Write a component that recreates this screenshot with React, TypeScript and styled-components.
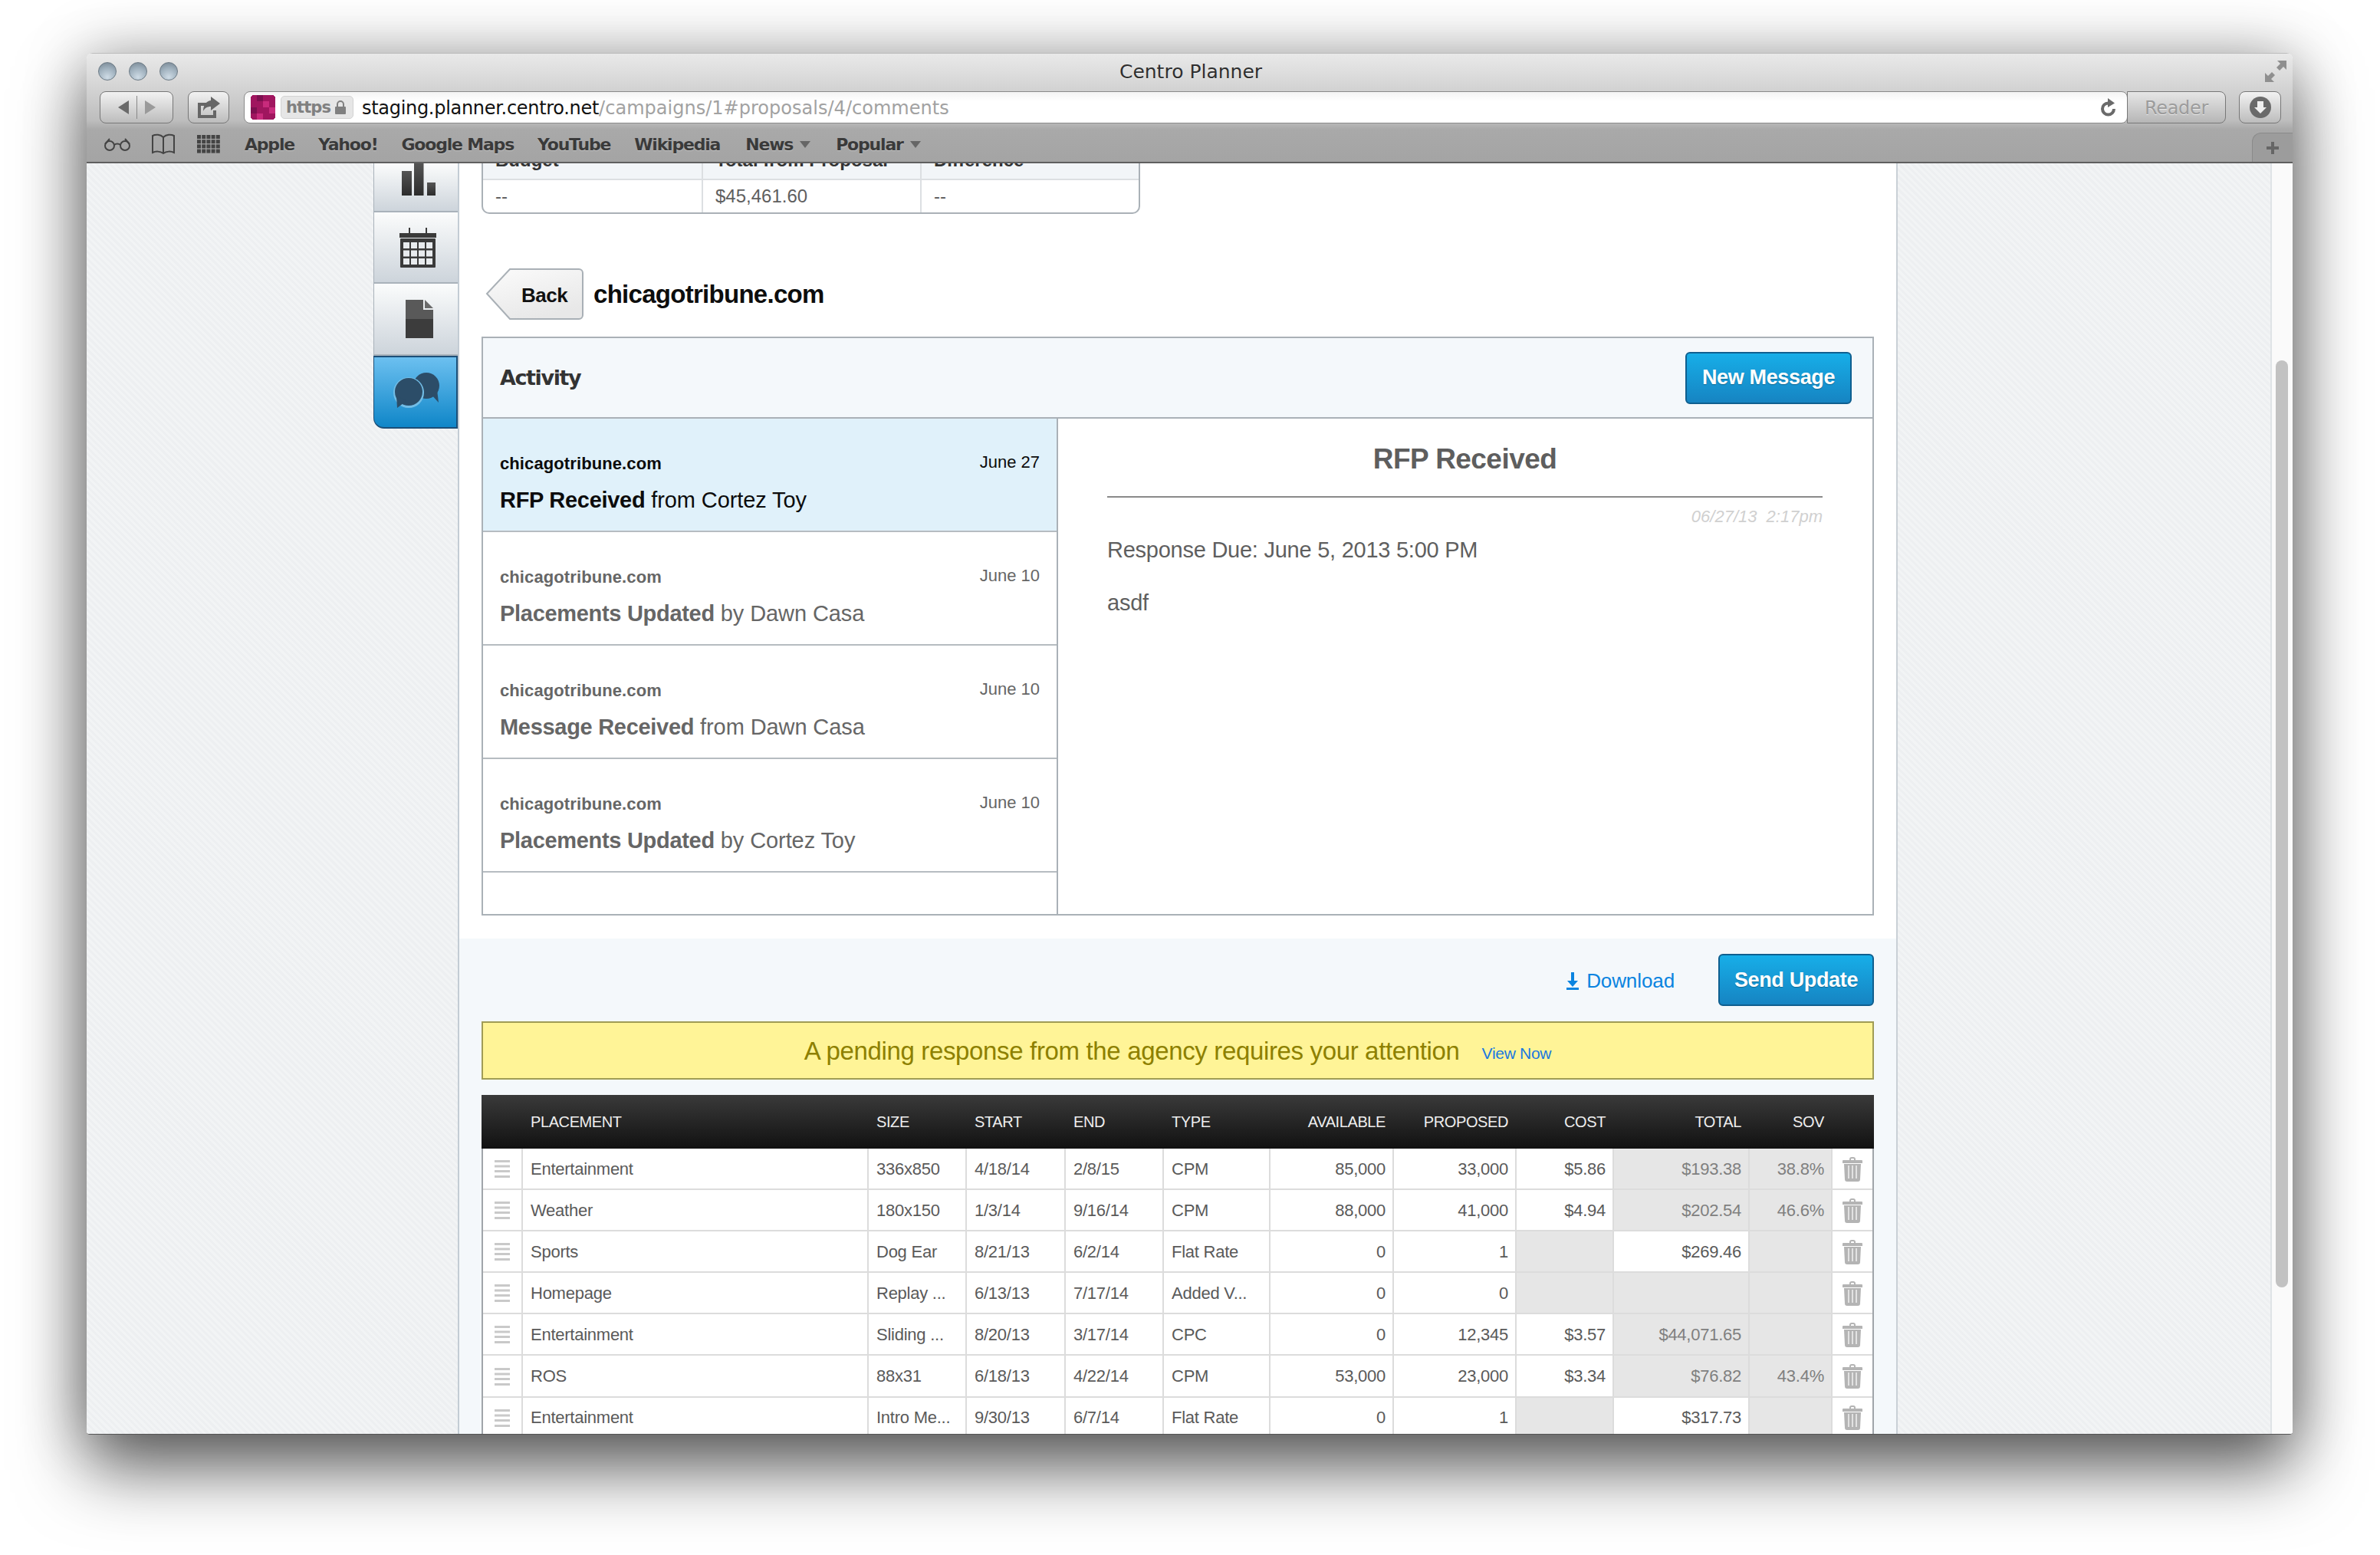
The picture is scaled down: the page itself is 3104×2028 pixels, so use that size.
import React from 'react'
import styled, { createGlobalStyle } from 'styled-components'

const GlobalStyle = createGlobalStyle`
  html, body {
    margin: 0;
    padding: 0;
    background: #fff;
  }
  * {
    box-sizing: border-box;
  }
`

const HELV = `"Liberation Sans", Arial, sans-serif`
const LUCIDA = `"DejaVu Sans", sans-serif`

const Desktop = styled.div`
  width: 3104px;
  height: 2028px;
  padding: 69px 114px 158px 113px;
  background: #fff;
  overflow: hidden;
`

const Win = styled.div`
  width: 2877px;
  height: 1802px;
  display: flex;
  flex-direction: column;
  border-radius: 8px 8px 4px 4px;
  overflow: hidden;
  box-shadow: 0 46px 90px rgba(0, 0, 0, 0.58), 0 0 80px rgba(0, 0, 0, 0.28);
  border-bottom: 1px solid #555;
`

const Chrome = styled.div`
  height: 144px;
  flex: none;
  background: linear-gradient(#e9e9e9 0, #d2d2d2 34%, #bdbdbd 62%, #a9a9a9 70%, #a4a4a4 100%);
  border-top: 1px solid #bcbcbc;
  border-bottom: 2px solid #5f5f5f;
  display: flex;
  flex-direction: column;
`

const TitleBar = styled.div`
  height: 46px;
  flex: none;
  padding: 0 8px 0 15px;
  display: grid;
  grid-template-columns: 1fr auto 1fr;
  align-items: center;
`

const Lights = styled.div`
  display: flex;
  gap: 16px;
`

const Light = styled.div`
  width: 24px;
  height: 24px;
  border-radius: 50%;
  border: 1px solid #6c7a85;
  background: radial-gradient(circle at 50% 85%, #cfdce6 0, #9fb0bd 55%, #74838f 100%);
`

const Title = styled.div`
  text-align: center;
  font: 25px ${LUCIDA};
  color: #2f2f2f;
  text-shadow: 0 1px 0 rgba(255, 255, 255, 0.6);
  margin-right: 4px;
`

const Expand = styled.svg`
  justify-self: end;
`

const ToolRow = styled.div`
  height: 42px;
  flex: none;
  margin-top: 3px;
  padding: 0 15px 0 17px;
  display: flex;
  align-items: center;
`

const ToolBtn = styled.div<{ $w: number; $ml?: number }>`
  width: ${p => p.$w}px;
  height: 42px;
  flex: none;
  margin-left: ${p => p.$ml ?? 0}px;
  border: 1px solid #777;
  border-radius: 8px;
  background: linear-gradient(#f2f2f2, #bcbcbc);
  display: flex;
  align-items: center;
  justify-content: center;
`

const BackForward = styled(ToolBtn)`
  margin-right: 19px;
  gap: 10px;
`

const Sep = styled.div`
  width: 1px;
  height: 30px;
  background: #888;
`

const UrlBar = styled.div`
  flex: 1;
  height: 42px;
  margin-left: 19px;
  display: flex;
  align-items: center;
  background: linear-gradient(#f4f4f4 0, #fff 30%);
  border: 1px solid #8a8a8a;
  border-radius: 8px;
  padding-left: 8px;
  overflow: hidden;
`

const Https = styled.div`
  width: 95px;
  height: 30px;
  margin: 0 11px 0 7px;
  display: flex;
  align-items: center;
  gap: 6px;
  padding-left: 6px;
  background: #e6e6e6;
  border-radius: 5px;
  border: 1px solid #d2d2d2;
  font: bold 21px ${LUCIDA};
  letter-spacing: -0.9px;
  color: #808080;
`

const Host = styled.span`
  font: 24px ${LUCIDA};
  letter-spacing: -0.3px;
  color: #111;
  white-space: nowrap;
  margin-top: 2px;
`

const UrlPath = styled.span`
  color: #a2a2a2;
  letter-spacing: 0.02px;
`

const UrlEnd = styled.div`
  flex: 1;
  display: flex;
  justify-content: flex-end;
  align-items: center;
  padding-right: 14px;
`

const Reader = styled.div`
  width: 129px;
  height: 42px;
  flex: none;
  margin-left: -1px;
  padding-top: 2px;
  border: 1px solid #777;
  border-radius: 0 8px 8px 0;
  background: linear-gradient(#e6e6e6, #b6b6b6);
  font: 24px ${LUCIDA};
  color: #9c9c9c;
  text-shadow: 0 1px 0 rgba(255, 255, 255, 0.6);
  display: flex;
  align-items: center;
  justify-content: center;
  letter-spacing: -0.3px;
`

const Bookmarks = styled.div`
  flex: 1;
  display: flex;
  align-items: center;
  padding: 4px 0 0 21px;
  position: relative;
`

const ShelfIcon = styled.svg<{ $ml: number }>`
  margin-left: ${p => p.$ml}px;
  flex: none;
`

const Mark = styled.div<{ $left?: number }>`
  font: bold 22px ${LUCIDA};
  letter-spacing: -1.2px;
  color: #3a3a3a;
  text-shadow: 0 1px 0 rgba(255, 255, 255, 0.35);
  margin-left: ${p => p.$left ?? 31}px;
  white-space: nowrap;
  display: flex;
  align-items: center;
  gap: 9px;
`

const Caret = styled.i`
  width: 0;
  height: 0;
  border-left: 7px solid transparent;
  border-right: 7px solid transparent;
  border-top: 9px solid #666;
`

const PlusTab = styled.div`
  position: absolute;
  right: 0;
  bottom: 0;
  width: 53px;
  height: 38px;
  background: #9c9c9c;
  border-radius: 12px 0 0 0;
  border-left: 1px solid #8a8a8a;
  border-top: 1px solid #8a8a8a;
  display: flex;
  align-items: center;
  justify-content: center;
`

const Viewport = styled.div`
  flex: 1;
  min-height: 0;
  display: flex;
  overflow: hidden;
  background-color: #edeff1;
  background-image: repeating-linear-gradient(
    45deg,
    rgba(255, 255, 255, 0.3) 0,
    rgba(255, 255, 255, 0.3) 3px,
    transparent 3px,
    transparent 6px
  );
`

const Page = styled.div`
  flex: none;
  display: flex;
`

const Gutter = styled.div`
  width: 29px;
  flex: none;
  margin-left: 486px;
  background: #fafafa;
  border-left: 2px solid #dfe3e6;
  padding: 257px 6px 0 5px;
`

const Thumb = styled.div`
  height: 1209px;
  background: #c2c2c2;
  border-radius: 8px;
`

const SideNav = styled.div`
  width: 110px;
  margin-left: 374px;
  flex: none;
  display: flex;
  flex-direction: column;
`

const NavTab = styled.div<{ $h: number; $active?: boolean; $pb?: number; $pl?: number }>`
  height: ${p => p.$h}px;
  display: flex;
  align-items: center;
  justify-content: center;
  padding: 0 0 ${p => p.$pb ?? 0}px ${p => p.$pl ?? 5}px;
  background: ${p =>
    p.$active ? 'linear-gradient(#6cc0f0, #0f86c8)' : 'linear-gradient(#fbfcfc, #cdd4db)'};
  border: 1px solid ${p => (p.$active ? '#1c4f78' : '#a9b2ba')};
  border-width: ${p => (p.$active ? '2px 2px 2px 1px' : '0 0 2px 1px')};
  border-radius: ${p => (p.$active ? '0 0 0 14px' : '0')};
`

const Column = styled.div`
  width: 1878px;
  flex: none;
  background: #fff;
  border-left: 2px solid #c3ccd4;
  border-right: 2px solid #c9d0d6;
  overflow: hidden;
  display: flex;
  flex-direction: column;
`

const Upper = styled.div`
  padding: 0 29px 30px 29px;
  background: #fff;
`

const SummaryTable = styled.div`
  width: 859px;
  height: 66px;
  display: grid;
  grid-template-columns: 287px 285px 1fr;
  grid-template-rows: 22px 1fr;
  border: 2px solid #aab1b7;
  border-top: 0;
  border-radius: 0 0 10px 10px;
  overflow: hidden;
  font: 24px ${HELV};
  color: #5f5f5f;
`

const SummaryHead = styled.div`
  background: #f2f5f8;
  border-bottom: 2px solid #dcdfe2;
  border-right: 2px solid #dcdfe2;
  padding-left: 16px;
  font-weight: bold;
  color: #333;
  line-height: 24px;
  height: 22px;
  overflow: hidden;
  & > span {
    display: block;
    margin-top: -16px;
  }
  &:nth-child(3) {
    border-right: 0;
  }
`

const SummaryCell = styled.div`
  border-right: 2px solid #dcdfe2;
  padding-left: 16px;
  display: flex;
  align-items: center;
  &:last-child {
    border-right: 0;
  }
`

const TitleRow = styled.div`
  display: flex;
  align-items: center;
  margin-top: 71px;
  height: 67px;
  padding-left: 5px;
`

const BackBtn = styled.div`
  width: 128px;
  height: 67px;
  flex: none;
  position: relative;
  font: bold 26px ${HELV};
  letter-spacing: -0.5px;
  color: #111;
  display: flex;
  align-items: center;
  padding: 4px 0 0 47px;
`

const BackShape = styled.svg`
  position: absolute;
  left: 0;
  top: 0;
`

const BackLabel = styled.span`
  position: relative;
`

const SiteTitle = styled.div`
  margin-left: 13px;
  font: bold 33px ${HELV};
  letter-spacing: -0.72px;
  color: #0d0d0d;
`

const Panel = styled.div`
  margin-top: 22px;
  height: 755px;
  border: 2px solid #aab1b7;
  display: flex;
  flex-direction: column;
`

const PanelHead = styled.div`
  height: 105px;
  flex: none;
  background: #f4f8fb;
  border-bottom: 2px solid #aab1b7;
  display: flex;
  align-items: center;
  justify-content: space-between;
  padding: 0 27px 0 22px;
`

const PanelTitle = styled.div`
  font: bold 27px ${LUCIDA};
  letter-spacing: -1.4px;
  color: #333;
`

const BlueBtn = styled.div<{ $w: number; $h: number }>`
  width: ${p => p.$w}px;
  height: ${p => p.$h}px;
  flex: none;
  background: linear-gradient(#17aee8, #1684c2);
  border: 2px solid #0f5f8f;
  border-radius: 6px;
  color: #fff;
  font: bold 27px ${HELV};
  letter-spacing: -0.35px;
  text-shadow: 0 1px 1px rgba(0, 0, 0, 0.3);
  display: flex;
  align-items: center;
  justify-content: center;
`

const PanelBody = styled.div`
  flex: 1;
  min-height: 0;
  display: flex;
`

const MsgList = styled.div`
  width: 750px;
  flex: none;
  border-right: 2px solid #aab1b7;
  display: flex;
  flex-direction: column;
`

const MsgRow = styled.div<{ $active?: boolean }>`
  height: 148px;
  flex: none;
  padding: 0 22px;
  background: ${p => (p.$active ? '#e0f1fa' : '#fff')};
  border-bottom: 2px solid #b6bcc1;
  display: flex;
  flex-direction: column;
  color: ${p => (p.$active ? '#0c0c0c' : '#666')};
`

const MsgTop = styled.div`
  display: flex;
  justify-content: space-between;
  margin-top: 45px;
  height: 28px;
  align-items: center;
`

const MsgSite = styled.div`
  font: bold 22px ${HELV};
  letter-spacing: 0.1px;
`

const MsgDate = styled.div`
  font: 22px ${HELV};
  margin-top: -4px;
`

const MsgLine = styled.div`
  margin-top: 17px;
  font: 29px ${HELV};
  letter-spacing: -0.1px;
  white-space: nowrap;
  & > b {
    letter-spacing: -0.3px;
  }
`

const Detail = styled.div`
  flex: 1;
  padding: 0 65px 0 64px;
  color: #5f5f5f;
`

const DetailTitle = styled.div`
  margin-top: 31px;
  text-align: center;
  font: bold 37px ${HELV};
  letter-spacing: -0.55px;
  color: #5e5e5e;
  line-height: 44px;
  padding-bottom: 26px;
  border-bottom: 2px solid #8a8a8a;
`

const DetailDate = styled.div`
  margin-top: 12px;
  text-align: right;
  font: italic 22px ${HELV};
  color: #d0d0d0;
  word-spacing: 6px;
`

const DetailText = styled.div<{ $top: number }>`
  margin-top: ${p => p.$top}px;
  font: 29px ${HELV};
  letter-spacing: -0.25px;
`

const Lower = styled.div`
  flex: 1;
  background: #f4f8fb;
  padding: 20px 29px 0 29px;
`

const ActionRow = styled.div`
  display: flex;
  justify-content: flex-end;
  align-items: center;
  height: 68px;
`

const DownloadLink = styled.div`
  display: flex;
  align-items: center;
  gap: 10px;
  margin: 2px 57px 0 0;
  font: 26px ${HELV};
  letter-spacing: -0.1px;
  color: #0a84e0;
`

const Banner = styled.div`
  margin-top: 20px;
  height: 76px;
  background: #fff497;
  border: 2px solid #a09c55;
  display: flex;
  align-items: center;
  justify-content: center;
  gap: 29px;
  padding-top: 2px;
  font: 33px ${HELV};
  letter-spacing: -0.35px;
  color: #8d8000;
`

const ViewNow = styled.a`
  font: 21px ${HELV};
  color: #1a78e0;
  letter-spacing: -0.3px;
  margin-top: 5px;
`

const COLS = '451px 128px 129px 128px 139px 161px 160px 127px 177px 108px 1fr'

const Grid = styled.div`
  margin-top: 20px;
  border-left: 2px solid #a0a5aa;
  border-right: 2px solid #a0a5aa;
  background: #fff;
`

const HeadRow = styled.div`
  margin: 0 -2px;
  height: 70px;
  display: grid;
  grid-template-columns: 54px ${COLS};
  align-items: center;
  background: linear-gradient(#3a3a3a, #111);
  font: 20px ${HELV};
  letter-spacing: -0.4px;
  color: #eee;
`

const HeadCell = styled.div<{ $right?: boolean }>`
  text-align: ${p => (p.$right ? 'right' : 'left')};
  padding: 0 ${p => (p.$right ? '11px' : '6px')} 0 10px;
  white-space: nowrap;
`

const BodyRow = styled.div`
  height: 54.1px;
  display: grid;
  grid-template-columns: 52px ${COLS};
  border-bottom: 2px solid #dcdcdc;
`

const Cell = styled.div<{ $right?: boolean; $shade?: boolean; $center?: boolean }>`
  border-right: 2px solid #dcdcdc;
  display: flex;
  align-items: center;
  justify-content: ${p => (p.$center ? 'center' : p.$right ? 'flex-end' : 'flex-start')};
  padding: 1px ${p => (p.$center ? '0' : p.$right ? '9px' : '4px')} 0 ${p => (p.$center ? '0' : '10px')};
  font: 22px ${HELV};
  letter-spacing: -0.25px;
  color: ${p => (p.$shade ? '#808080' : '#5a5a5a')};
  background: ${p => (p.$shade ? '#e6e6e6' : '#fff')};
  white-space: nowrap;
  overflow: hidden;
  &:last-child {
    border-right: 0;
  }
`

const Handle = () => (
  <svg width="20" height="23" viewBox="0 0 20 23">
    {[0, 6.5, 13, 20].map(y => (
      <rect key={y} x="0" y={y} width="20" height="3" fill="#c9c9c9" />
    ))}
  </svg>
)

const Trash = () => (
  <svg width="26" height="32" viewBox="0 0 26 32">
    <path d="M9 4V3a3 3 0 0 1 3-3h2a3 3 0 0 1 3 3v1h-2V3a1 1 0 0 0-1-1h-2a1 1 0 0 0-1 1v1z" fill="#b4b4b4" />
    <path d="M1 4h24a1 1 0 0 1 1 1v3H0V5a1 1 0 0 1 1-1z" fill="#b4b4b4" />
    <path d="M2 9h22l-1 20a3 3 0 0 1-3 3H6a3 3 0 0 1-3-3z" fill="#b4b4b4" />
    <path d="M8 11v17M13 11v17M18 11v17" stroke="#e2e2e2" strokeWidth="2" />
  </svg>
)

const BarsIcon = () => (
  <svg width="44" height="43" viewBox="0 0 44 43">
    <defs>
      <linearGradient id="dk" x1="0" y1="0" x2="0" y2="1">
        <stop offset="0" stopColor="#555" />
        <stop offset="1" stopColor="#2c2c2c" />
      </linearGradient>
    </defs>
    <rect x="0" y="11" width="13" height="32" fill="url(#dk)" />
    <rect x="16" y="0" width="12.5" height="43" fill="url(#dk)" />
    <rect x="33" y="26" width="11" height="17" fill="url(#dk)" />
  </svg>
)

const CalendarIcon = () => (
  <svg width="48" height="52" viewBox="0 0 48 52">
    <rect x="0" y="7" width="48" height="6" fill="#3a3a3a" />
    <rect x="1" y="14" width="46" height="38" rx="1" fill="#3a3a3a" />
    <rect x="12" y="0" width="2" height="9" fill="#3a3a3a" />
    <rect x="34" y="0" width="2" height="9" fill="#3a3a3a" />
    {[0, 1, 2].map(r =>
      [0, 1, 2, 3].map(c => (
        <rect key={`${r}${c}`} x={5 + c * 10} y={19 + r * 10.5} width="8" height="8" fill="#e8ebee" />
      ))
    )}
  </svg>
)

const DocIcon = () => (
  <svg width="36" height="50" viewBox="0 0 36 50">
    <path d="M0 0h23v13h13v37H0z" fill="#3c3c3c" />
    <path d="M0 0h23v13h13v12H0z" fill="#595959" />
    <path d="M25 0l11 11H25z" fill="#6a6a6a" />
  </svg>
)

const ChatIcon = () => (
  <svg width="64" height="47" viewBox="0 0 64 47">
    <circle cx="44" cy="17" r="17" fill="#2c4d68" />
    <path d="M50 28l10 11-2-17z" fill="#2c4d68" />
    <circle cx="21" cy="26" r="20" fill="#72bde6" />
    <circle cx="21" cy="25" r="18" fill="#2c4d68" />
    <path d="M5 30l1 16 12-9z" fill="#2c4d68" />
  </svg>
)

type RowData = {
  name: string
  size: string
  start: string
  end: string
  type: string
  avail: string
  proposed: string
  cost: string
  total: string
  sov: string
  totalOpen?: boolean
}

const rows: RowData[] = [
  { name: 'Entertainment', size: '336x850', start: '4/18/14', end: '2/8/15', type: 'CPM', avail: '85,000', proposed: '33,000', cost: '$5.86', total: '$193.38', sov: '38.8%' },
  { name: 'Weather', size: '180x150', start: '1/3/14', end: '9/16/14', type: 'CPM', avail: '88,000', proposed: '41,000', cost: '$4.94', total: '$202.54', sov: '46.6%' },
  { name: 'Sports', size: 'Dog Ear', start: '8/21/13', end: '6/2/14', type: 'Flat Rate', avail: '0', proposed: '1', cost: '', total: '$269.46', sov: '', totalOpen: true },
  { name: 'Homepage', size: 'Replay ...', start: '6/13/13', end: '7/17/14', type: 'Added V...', avail: '0', proposed: '0', cost: '', total: '', sov: '' },
  { name: 'Entertainment', size: 'Sliding ...', start: '8/20/13', end: '3/17/14', type: 'CPC', avail: '0', proposed: '12,345', cost: '$3.57', total: '$44,071.65', sov: '' },
  { name: 'ROS', size: '88x31', start: '6/18/13', end: '4/22/14', type: 'CPM', avail: '53,000', proposed: '23,000', cost: '$3.34', total: '$76.82', sov: '43.4%' },
  { name: 'Entertainment', size: 'Intro Me...', start: '9/30/13', end: '6/7/14', type: 'Flat Rate', avail: '0', proposed: '1', cost: '', total: '$317.73', sov: '', totalOpen: true },
]

const messages = [
  { action: 'RFP Received', rest: 'from Cortez Toy', date: 'June 27', active: true },
  { action: 'Placements Updated', rest: 'by Dawn Casa', date: 'June 10' },
  { action: 'Message Received', rest: 'from Dawn Casa', date: 'June 10' },
  { action: 'Placements Updated', rest: 'by Cortez Toy', date: 'June 10' },
]

const App = () => (
  <>
    <GlobalStyle />
    <Desktop>
      <Win>
        <Chrome>
          <TitleBar>
            <Lights>
              <Light />
              <Light />
              <Light />
            </Lights>
            <Title>Centro Planner</Title>
            <Expand width="28" height="28" viewBox="0 0 28 28">
              <path d="M16 0h12v12l-4-4-5 5-4-4 5-5zM0 28V16l4 4 5-5 4 4-5 5 4 4z" fill="#8f8f8f" />
            </Expand>
          </TitleBar>
          <ToolRow>
            <BackForward $w={96}>
              <svg width="14" height="18" viewBox="0 0 14 18"><path d="M14 0v18L0 9z" fill="#6a6a6a" /></svg>
              <Sep />
              <svg width="14" height="18" viewBox="0 0 14 18"><path d="M0 0v18l14-9z" fill="#9a9a9a" /></svg>
            </BackForward>
            <ToolBtn $w={54}>
              <svg width="34" height="28" viewBox="0 0 34 28">
                <path d="M3 8h12v4H7v12h16v-6h4v10H3z" fill="#666" />
                <path d="M20 0l12 9-12 9v-5c-5 0-8 2-10 6 0-8 4-13 10-14z" fill="#666" />
              </svg>
            </ToolBtn>
            <UrlBar>
              <svg width="32" height="32" viewBox="0 0 4 4" shapeRendering="crispEdges">
                <rect width="4" height="4" rx="0.5" fill="#a0165f" />
                <rect x="1" y="0" width="1" height="1" fill="#7d1050" />
                <rect x="2" y="1" width="1" height="1" fill="#c82b7c" />
                <rect x="0" y="2" width="1" height="1" fill="#7d1050" />
                <rect x="3" y="2" width="1" height="1" fill="#c82b7c" />
                <rect x="1" y="3" width="1" height="1" fill="#c82b7c" />
              </svg>
              <Https>
                https
                <svg width="14" height="18" viewBox="0 0 14 18">
                  <path d="M3 8V5a4 4 0 0 1 8 0v3" fill="none" stroke="#808080" strokeWidth="2" />
                  <rect x="0" y="8" width="14" height="10" rx="1" fill="#808080" />
                </svg>
              </Https>
              <Host>
                staging.planner.centro.net<UrlPath>/campaigns/1#proposals/4/comments</UrlPath>
              </Host>
              <UrlEnd>
                <svg width="20" height="24" viewBox="0 0 20 24">
                  <path d="M17 14a7.5 7.5 0 1 1-7.5-7.5" fill="none" stroke="#6a6a6a" strokeWidth="4" />
                  <path d="M9 0l9 6.5L9 12z" fill="#6a6a6a" />
                </svg>
              </UrlEnd>
            </UrlBar>
            <Reader>Reader</Reader>
            <ToolBtn $w={55} $ml={17}>
              <svg width="28" height="28" viewBox="0 0 28 28">
                <circle cx="14" cy="14" r="14" fill="#6a6a6a" />
                <path d="M10 6h8v8h4l-8 8-8-8h4z" fill="#f0f0f0" />
              </svg>
            </ToolBtn>
          </ToolRow>
          <Bookmarks>
            <ShelfIcon $ml={0} width="38" height="18" viewBox="0 0 38 18" fill="none" stroke="#444" strokeWidth="2">
              <circle cx="9" cy="11" r="6" />
              <circle cx="29" cy="11" r="6" />
              <path d="M15 10c2-2 6-2 8 0M3 9l6-7M35 9l-6-7" />
            </ShelfIcon>
            <ShelfIcon $ml={24} width="34" height="28" viewBox="0 0 34 28" fill="none" stroke="#444" strokeWidth="2">
              <path d="M17 5C13 1 7 1 3 3v22c4-2 10-2 14 1 4-3 10-3 14-1V3c-4-2-10-2-14 2zM17 5v21" />
            </ShelfIcon>
            <ShelfIcon $ml={27} width="31" height="24" viewBox="0 0 31 24" fill="#444">
              {[0, 1, 2, 3].map(r =>
                [0, 1, 2, 3, 4].map(c => <rect key={`${r}-${c}`} x={c * 6.2} y={r * 6.2} width="5" height="5" />)
              )}
            </ShelfIcon>
            <Mark>Apple</Mark>
            <Mark>Yahoo!</Mark>
            <Mark>Google Maps</Mark>
            <Mark>YouTube</Mark>
            <Mark>Wikipedia</Mark>
            <Mark $left={33}>News<Caret /></Mark>
            <Mark $left={33}>Popular<Caret /></Mark>
            <PlusTab>
              <svg width="16" height="16" viewBox="0 0 16 16"><path d="M6 0h4v6h6v4h-6v6H6v-6H0V6h6z" fill="#666" /></svg>
            </PlusTab>
          </Bookmarks>
        </Chrome>
        <Viewport>
          <Page>
            <SideNav>
              <NavTab $h={64} $pb={21} $pl={7}><BarsIcon /></NavTab>
              <NavTab $h={93}><CalendarIcon /></NavTab>
              <NavTab $h={94} $pl={9}><DocIcon /></NavTab>
              <NavTab $h={95} $active $pb={4}><ChatIcon /></NavTab>
            </SideNav>
            <Column>
              <Upper>
                <SummaryTable>
                  <SummaryHead><span>Budget</span></SummaryHead>
                  <SummaryHead><span>Total from Proposal</span></SummaryHead>
                  <SummaryHead><span>Difference</span></SummaryHead>
                  <SummaryCell>--</SummaryCell>
                  <SummaryCell>$45,461.60</SummaryCell>
                  <SummaryCell>--</SummaryCell>
                </SummaryTable>
                <TitleRow>
                  <BackBtn>
                    <BackShape width="128" height="67" viewBox="0 0 128 67">
                      <defs>
                        <linearGradient id="bk" x1="0" y1="0" x2="0.5" y2="1">
                          <stop offset="0" stopColor="#fbfbfb" />
                          <stop offset="1" stopColor="#e8e8e8" />
                        </linearGradient>
                      </defs>
                      <path d="M32 1h90a5 5 0 0 1 5 5v55a5 5 0 0 1-5 5H32L2 33z" fill="url(#bk)" stroke="#a9b0b6" strokeWidth="2" />
                    </BackShape>
                    <BackLabel>Back</BackLabel>
                  </BackBtn>
                  <SiteTitle>chicagotribune.com</SiteTitle>
                </TitleRow>
                <Panel>
                  <PanelHead>
                    <PanelTitle>Activity</PanelTitle>
                    <BlueBtn $w={217} $h={68}>New Message</BlueBtn>
                  </PanelHead>
                  <PanelBody>
                    <MsgList>
                      {messages.map(m => (
                        <MsgRow key={m.action + m.rest} $active={m.active}>
                          <MsgTop>
                            <MsgSite>chicagotribune.com</MsgSite>
                            <MsgDate>{m.date}</MsgDate>
                          </MsgTop>
                          <MsgLine><b>{m.action}</b> {m.rest}</MsgLine>
                        </MsgRow>
                      ))}
                    </MsgList>
                    <Detail>
                      <DetailTitle>RFP Received</DetailTitle>
                      <DetailDate>06/27/13 2:17pm</DetailDate>
                      <DetailText $top={14}>Response Due: June 5, 2013 5:00 PM</DetailText>
                      <DetailText $top={36}>asdf</DetailText>
                    </Detail>
                  </PanelBody>
                </Panel>
              </Upper>
              <Lower>
                <ActionRow>
                  <DownloadLink>
                    <svg width="16" height="24" viewBox="0 0 16 24">
                      <path d="M6 1h4v11h5l-7 8-7-8h5zM0 21h16v3H0z" fill="#0a84e0" />
                    </svg>
                    Download
                  </DownloadLink>
                  <BlueBtn $w={203} $h={68}>Send Update</BlueBtn>
                </ActionRow>
                <Banner>
                  A pending response from the agency requires your attention
                  <ViewNow>View Now</ViewNow>
                </Banner>
                <Grid>
                  <HeadRow>
                    <HeadCell />
                    <HeadCell>PLACEMENT</HeadCell>
                    <HeadCell>SIZE</HeadCell>
                    <HeadCell>START</HeadCell>
                    <HeadCell>END</HeadCell>
                    <HeadCell>TYPE</HeadCell>
                    <HeadCell $right>AVAILABLE</HeadCell>
                    <HeadCell $right>PROPOSED</HeadCell>
                    <HeadCell $right>COST</HeadCell>
                    <HeadCell $right>TOTAL</HeadCell>
                    <HeadCell $right>SOV</HeadCell>
                    <HeadCell />
                  </HeadRow>
                  {rows.map((r, i) => (
                    <BodyRow key={i}>
                      <Cell $center><Handle /></Cell>
                      <Cell>{r.name}</Cell>
                      <Cell>{r.size}</Cell>
                      <Cell>{r.start}</Cell>
                      <Cell>{r.end}</Cell>
                      <Cell>{r.type}</Cell>
                      <Cell $right>{r.avail}</Cell>
                      <Cell $right>{r.proposed}</Cell>
                      <Cell $right $shade={!r.cost}>{r.cost}</Cell>
                      <Cell $right $shade={!r.totalOpen}>{r.total}</Cell>
                      <Cell $right $shade>{r.sov}</Cell>
                      <Cell $center><Trash /></Cell>
                    </BodyRow>
                  ))}
                </Grid>
              </Lower>
            </Column>
          </Page>
          <Gutter><Thumb /></Gutter>
        </Viewport>
      </Win>
    </Desktop>
  </>
)

export default App
